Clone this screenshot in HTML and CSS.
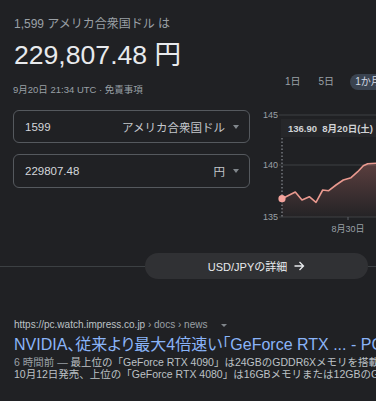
FILE: index.html
```html
<!DOCTYPE html>
<html lang="ja">
<head>
<meta charset="utf-8">
<link rel="stylesheet" href="styles.css">
</head>
<body>
<div class="page">
  <header class="head">
    <div class="label">1,599 アメリカ合衆国ドル は</div>
    <div class="amount">229,807.48 円</div>
  </header>
  <section class="main">
    <div class="conv">
      <div class="meta">9月20日 21:34 UTC · 免責事項</div>
      <div class="field">
        <span class="val">1599</span>
        <span class="unit">アメリカ合衆国ドル</span>
        <span class="caret"></span>
      </div>
      <div class="field field2">
        <span class="val">229807.48</span>
        <span class="unit">円</span>
        <span class="caret"></span>
      </div>
    </div>
    <div class="side">
      <div class="tabs">
        <span class="tab">1日</span>
        <span class="tab">5日</span>
        <span class="tab active">1か月</span>
      </div>
      <svg class="chart" width="120" height="132" viewBox="0 0 120 132">
        <defs>
          <linearGradient id="fillg" x1="0" y1="0" x2="0" y2="1">
            <stop offset="0" stop-color="#f28b82" stop-opacity="0.28"/>
            <stop offset="1" stop-color="#f28b82" stop-opacity="0.02"/>
          </linearGradient>
        </defs>
        <line x1="23" y1="10" x2="120" y2="10" class="grid"/>
        <line x1="23" y1="60" x2="120" y2="60" class="grid"/>
        <line x1="23" y1="112" x2="120" y2="112" class="grid"/>
        <text x="7" y="13" class="axis">145</text>
        <text x="7" y="63" class="axis">140</text>
        <text x="7" y="115" class="axis">135</text>
        <rect x="25" y="14" width="100" height="18" class="tip"/>
        <text x="32" y="26.5" class="tiptext">136.90  8月20日(土)</text>
        <line x1="26" y1="33" x2="26" y2="112" class="cursor"/>
        <path class="area" d="M26 93.7 L39.3 87 L46 95 L53.3 91.7 L60 97.3 L66.7 85 L72.7 85.7 L80 80 L87.3 75 L95 72.7 L101.7 66.7 L107.3 60.7 L111.7 58.7 L120 58.3 L120 112 L26 112 Z"/>
        <path class="line" d="M26 93.7 L39.3 87 L46 95 L53.3 91.7 L60 97.3 L66.7 85 L72.7 85.7 L80 80 L87.3 75 L95 72.7 L101.7 66.7 L107.3 60.7 L111.7 58.7 L120 58.3"/>
        <circle cx="26" cy="93.7" r="3.6" class="dot"/>
        <line x1="92" y1="112" x2="92" y2="115" class="tick"/>
        <text x="92" y="127" class="axis mid">8月30日</text>
      </svg>
    </div>
  </section>
  <div class="more">
    <span class="rule"></span>
    <span class="btn">USD/JPYの詳細
      <svg class="arrow" width="11" height="10" viewBox="0 0 11 10"><path d="M0.5 5 H9.5 M5.5 1 L9.5 5 L5.5 9" fill="none" stroke="#e8eaed" stroke-width="1.3"/></svg>
    </span>
    <span class="rule end"></span>
  </div>
  <article class="result">
    <div class="url">https://pc.watch.impress.co.jp<span class="crumb"> › docs › news</span><span class="more-caret"></span></div>
    <div class="title">NVIDIA、従来より最大4倍速い「GeForce RTX ... - PC Watch</div>
    <div class="snip first"><span class="age">6 時間前 — </span>最上位の「GeForce RTX 4090」は24GBのGDDR6Xメモリを搭載し、</div>
    <div class="snip">10月12日発売、上位の「GeForce RTX 4080」は16GBメモリまたは12GBのGDDR6Xメモリ</div>
  </article>
</div>
</body>
</html>
```
FILE: styles.css
```css
html, body {
  margin: 0;
  padding: 0;
  background: #202124;
}
body {
  width: 376px;
  height: 401px;
  overflow: hidden;
  font-family: "Liberation Sans", Arial, "Noto Sans CJK JP", sans-serif;
  color: #e8eaed;
}
.page {
  width: 376px;
}
.head {
  padding: 16px 0 0 14px;
}
.label {
  font-size: 12px;
  line-height: 16px;
  color: #9aa0a6;
  white-space: nowrap;
}
.amount {
  margin-top: 7px;
  font-size: 26.6px;
  line-height: 32px;
  color: #e8eaed;
  white-space: nowrap;
}
.main {
  display: flex;
  height: 166px;
}
.conv {
  width: 237px;
  padding-left: 13px;
  padding-right: 6px;
}
.meta {
  margin-top: 12px;
  font-size: 9.5px;
  line-height: 14px;
  color: #9aa0a6;
  white-space: nowrap;
}
.field {
  margin-top: 13px;
  height: 31px;
  border: 1px solid #55595e;
  border-radius: 6px;
  display: flex;
  align-items: center;
  padding: 0 10px 0 11px;
  font-size: 11.5px;
  color: #d4d7db;
}
.field2 {
  margin-top: 11px;
  height: 32px;
}
.val {
  flex: 1;
}
.unit {
  color: #c4c7cb;
}
.caret {
  margin-left: 8px;
  width: 0;
  height: 0;
  border-left: 3.5px solid transparent;
  border-right: 3.5px solid transparent;
  border-top: 4px solid #80868b;
}
.side {
  width: 120px;
  flex: none;
}
.tabs {
  display: flex;
  align-items: center;
  height: 17px;
  margin-top: 2px;
  padding-left: 23px;
  gap: 6px;
  white-space: nowrap;
}
.tab {
  font-size: 10px;
  color: #9aa0a6;
  padding: 0 6px;
  line-height: 16px;
}
.tab.active {
  margin-left: 4px;
  padding: 0 6px 0 5px;
  background: #3a4350;
  color: #d6dde6;
  border-radius: 8px;
}
.chart {
  display: block;
  margin-top: 15px;
  overflow: visible;
}
.grid {
  stroke: #3c4043;
  stroke-width: 1;
}
.axis {
  font-family: "Liberation Sans", Arial, "Noto Sans CJK JP", sans-serif;
  font-size: 9px;
  fill: #9aa0a6;
}
.axis.mid {
  text-anchor: middle;
}
.tip {
  fill: #26272a;
}
.tiptext {
  font-family: "Liberation Sans", Arial, "Noto Sans CJK JP", sans-serif;
  font-size: 9.5px;
  font-weight: bold;
  fill: #d0d3d6;
  white-space: pre;
}
.cursor {
  stroke: #9aa0a6;
  stroke-width: 1;
  stroke-dasharray: 1.5 2;
}
.area {
  fill: url(#fillg);
}
.line {
  fill: none;
  stroke: #e9998f;
  stroke-width: 1.6;
  stroke-linejoin: round;
}
.dot {
  fill: #f4a39c;
}
.tick {
  stroke: #5f6368;
}
.more {
  display: flex;
  align-items: center;
  margin-top: 16px;
  height: 26px;
}
.rule {
  flex: 1;
  height: 1px;
  background: #3c4043;
}
.rule.end {
  flex: none;
  width: 8px;
}
.btn {
  width: 223px;
  height: 26px;
  border-radius: 13px;
  background: #303134;
  display: flex;
  align-items: center;
  justify-content: center;
  gap: 7px;
  font-size: 11px;
  color: #e8eaed;
  white-space: nowrap;
}
.arrow {
  display: block;
}
.result {
  padding: 39px 0 0 14px;
  white-space: nowrap;
  overflow: hidden;
}
.url {
  font-size: 10px;
  line-height: 14px;
  color: #bdc1c6;
}
.crumb {
  color: #9aa0a6;
}
.more-caret {
  display: inline-block;
  margin-left: 14px;
  vertical-align: middle;
  width: 0;
  height: 0;
  border-left: 3px solid transparent;
  border-right: 3px solid transparent;
  border-top: 3.5px solid #80868b;
}
.title {
  margin-top: 3px;
  font-size: 16px;
  line-height: 20px;
  color: #8ab4f8;
  font-feature-settings: "palt";
}
.snip {
  font-size: 10.5px;
  line-height: 12px;
  color: #bdc1c6;
}
.snip.first {
  margin-top: 1px;
}
.age {
  color: #9aa0a6;
}
```
